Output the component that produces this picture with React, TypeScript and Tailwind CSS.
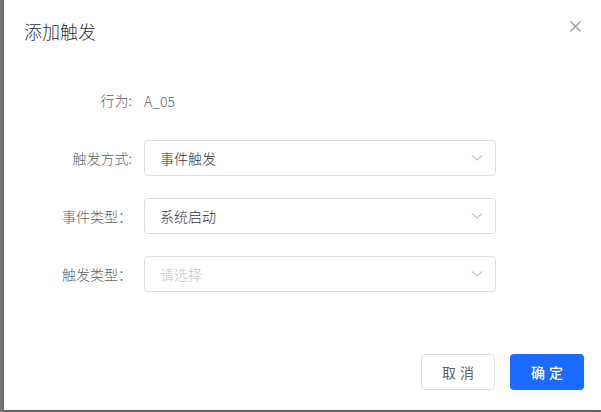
import React from "react";

const font = { fontFamily: '"Noto Sans CJK SC", "Noto Sans", sans-serif' };

function Chevron() {
  return (
    <svg width="12" height="8" viewBox="0 0 12 8" className="shrink-0">
      <path d="M1 1.5 L6 6 L11 1.5" fill="none" stroke="#c0c4cc" strokeWidth="1.1" />
    </svg>
  );
}

function Row({ label, children }: { label: string; children: React.ReactNode }) {
  return (
    <div className="flex items-center h-[36px]">
      <div className="w-[128px] text-right text-[14px] font-light text-[#606266] shrink-0">{label}</div>
      <div className="ml-[12px]">{children}</div>
    </div>
  );
}

function Select({ value, placeholder }: { value?: string; placeholder?: string }) {
  return (
    <div className="w-[352px] h-[36px] border border-[#dcdfe6] rounded-[4px] flex items-center justify-between pl-[15px] pr-[12px]">
      <span className={"text-[14px] font-light " + (value ? "text-[#333333]" : "text-[#c0c4cc]")}>{value ?? placeholder}</span>
      <Chevron />
    </div>
  );
}

export default function App() {
  return (
    <div className="w-[601px] h-[412px] bg-[#757677] flex" style={font}>
      <div className="ml-[4px] w-[597px] h-[410px] bg-white flex flex-col shadow-[0_1px_3px_rgba(0,0,0,0.3)]">
        <div className="flex items-start justify-between pl-[20px] pr-[20px] pt-[18px]">
          <div className="text-[18px] leading-[26px] font-light text-[#303133]">添加触发</div>
          <svg width="11" height="11" viewBox="0 0 11 11" className="mt-[3px]">
            <path d="M0.5 0.5 L10.5 10.5 M10.5 0.5 L0.5 10.5" stroke="#909399" strokeWidth="1.1" />
          </svg>
        </div>
        <div className="flex flex-col gap-[22px] mt-[38px]">
          <Row label="行为:">
            <span className="text-[14px] font-light text-[#606266]">A_05</span>
          </Row>
          <Row label="触发方式:">
            <Select value="事件触发" />
          </Row>
          <Row label="事件类型：">
            <Select value="系统启动" />
          </Row>
          <Row label="触发类型：">
            <Select placeholder="请选择" />
          </Row>
        </div>
        <div className="flex justify-end gap-[15px] pr-[17px] mt-[62px]">
          <button className="w-[74px] h-[36px] border border-[#dcdfe6] rounded-[4px] bg-white text-[14px] text-[#606266] tracking-[4px] pl-[4px]">
            取消
          </button>
          <button className="w-[74px] h-[36px] rounded-[4px] bg-[#1a6cff] text-[14px] font-medium text-white tracking-[4px] pl-[4px]">
            确定
          </button>
        </div>
      </div>
    </div>
  );
}
